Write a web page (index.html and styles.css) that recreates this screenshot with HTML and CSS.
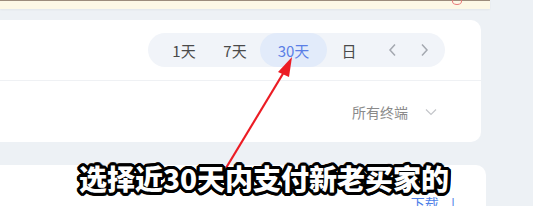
FILE: index.html
```html
<!DOCTYPE html>
<html lang="zh">
<head>
<meta charset="utf-8">
<link rel="stylesheet" href="styles.css">
</head>
<body>
<div class="page">
  <div class="topband"><span class="redmark"></span></div>
  <div class="card card1">
    <div class="row head">
      <div class="seg">
        <span class="item w1">1天</span>
        <span class="item w2">7天</span>
        <span class="item sel">30天</span>
        <span class="item w4">日</span>
        <span class="item arr1"><svg width="9" height="14" viewBox="0 0 9 14"><path d="M7 1.5 L2 7 L7 12.5" fill="none" stroke="#a4a8b0" stroke-width="1.5"/></svg></span>
        <span class="item arr2"><svg width="9" height="14" viewBox="0 0 9 14"><path d="M2 1.5 L7 7 L2 12.5" fill="none" stroke="#a4a8b0" stroke-width="1.5"/></svg></span>
      </div>
    </div>
    <div class="row sub">
      <span class="term">所有终端</span>
      <svg class="chev" width="12" height="8" viewBox="0 0 12 8"><path d="M1 1.5 L6 6.5 L11 1.5" fill="none" stroke="#c4c6ca" stroke-width="1.2"/></svg>
    </div>
  </div>
  <div class="card card2">
    <div class="dl">下载 <span class="down">↓</span></div>
  </div>
  <svg class="arrow" width="533" height="206" viewBox="0 0 533 206">
    <line x1="226" y1="168" x2="284" y2="72" stroke="#ec1c24" stroke-width="2.2"/>
    <polygon points="292,57 278,72 289,77" fill="#ec1c24"/>
  </svg>
  <div class="caption">选择近30天内支付新老买家的</div>
</div>
</body>
</html>
```
FILE: styles.css
```css
html, body {
  margin: 0;
  padding: 0;
}
body {
  background: #edf1f5;
  font-family: "Noto Sans CJK SC", "Noto Sans", sans-serif;
  width: 533px;
  height: 206px;
  overflow: hidden;
}
.page {
  position: relative;
  width: 533px;
  height: 206px;
  overflow: hidden;
}
.topband {
  position: relative;
  width: 490px;
  height: 8px;
  background: #fdf8e6;
  border-top: 1px solid #9c8c7c;
  box-shadow: 0 1px 2px rgba(0,0,0,0.05);
}
.redmark {
  position: absolute;
  left: 452px;
  top: -3px;
  width: 8px;
  height: 5px;
  border: 1.5px solid #e87a7a;
  border-radius: 50%;
}
.card {
  background: #fff;
}
.card1 {
  margin-top: 11px;
  width: 481px;
  height: 122px;
  border-radius: 0 10px 10px 0;
}
.row {
  display: flex;
  align-items: center;
  justify-content: flex-end;
}
.head {
  height: 60px;
  border-bottom: 1px solid #eff1f4;
  padding-right: 36px;
}
.seg {
  display: flex;
  align-items: center;
  height: 34px;
  padding: 0 10px;
  background: #f1f4f9;
  border-radius: 17px;
}
.item {
  display: flex;
  align-items: center;
  justify-content: center;
  height: 34px;
  font-size: 15px;
  color: #4a4a4a;
}
.w1 { width: 52px; }
.w2 { width: 50px; }
.sel {
  width: 67px;
  background: #e2ebfa;
  border-radius: 17px;
  color: #5b7fe6;
}
.w4 { width: 44px; }
.arr1 { width: 42px; }
.arr2 { width: 22px; }
.sub {
  height: 61px;
  padding-right: 44px;
}
.term {
  font-size: 14px;
  color: #8a8a8a;
  margin-right: 17px;
}
.card2 {
  margin-top: 23px;
  width: 486px;
  height: 60px;
  border-radius: 0 10px 0 0;
  display: flex;
  justify-content: flex-end;
  align-items: flex-start;
}
.dl {
  margin-top: 28px;
  margin-right: 26px;
  font-size: 14px;
  color: #4f7fe8;
}
.down {
  margin-left: 4px;
}
.arrow {
  position: absolute;
  left: 0;
  top: 0;
}
.caption {
  position: absolute;
  left: 79px;
  top: 159px;
  font-size: 28px;
  font-weight: 900;
  line-height: 38px;
  color: #fff;
  white-space: nowrap;
  text-shadow:
    2px 0 0 #000, -2px 0 0 #000, 0 2px 0 #000, 0 -2px 0 #000,
    2px 2px 0 #000, -2px -2px 0 #000, 2px -2px 0 #000, -2px 2px 0 #000,
    3px 0 0 #000, -3px 0 0 #000, 0 3px 0 #000, 0 -3px 0 #000,
    3px 1px 0 #000, -3px 1px 0 #000, 3px -1px 0 #000, -3px -1px 0 #000,
    1px 3px 0 #000, -1px 3px 0 #000, 1px -3px 0 #000, -1px -3px 0 #000;
}
```
